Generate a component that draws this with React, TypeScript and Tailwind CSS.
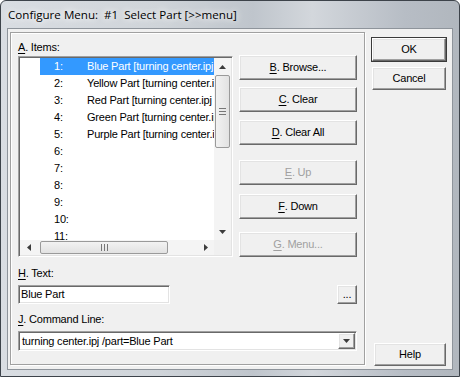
import React from "react";

const raised =
  "bg-[#f0f0f0] border border-t-white border-l-white border-r-[#696969] border-b-[#696969] shadow-[inset_-1px_-1px_0_#a0a0a0,inset_1px_1px_0_#e3e3e3]";
const sunken =
  "bg-white border border-t-[#a0a0a0] border-l-[#a0a0a0] border-r-white border-b-white shadow-[inset_1px_1px_0_#696969,inset_-1px_-1px_0_#e3e3e3] p-[1px]";

function U({ children }: { children: React.ReactNode }) {
  return <span className="underline underline-offset-[2px]">{children}</span>;
}

function Btn({
  children,
  disabled,
  className = "",
}: {
  children: React.ReactNode;
  disabled?: boolean;
  className?: string;
}) {
  return (
    <div
      className={`flex items-center justify-center text-[11px] ${raised} ${
        disabled ? "text-[#a0a0a0]" : "text-black"
      } ${className}`}
    >
      {children}
    </div>
  );
}

const rows = [
  "Blue Part [turning center.ipj /part=Blue Part]",
  "Yellow Part [turning center.ipj /part=Yellow Part]",
  "Red Part [turning center.ipj /part=Red Part]",
  "Green Part [turning center.ipj /part=Green Part]",
  "Purple Part [turning center.ipj /part=Purple Part]",
  "",
  "",
  "",
  "",
  "",
  "",
];

function Arrow({ dir }: { dir: "up" | "down" | "left" | "right" }) {
  const d = {
    up: "M3.5 0L7 4H0z",
    down: "M0 0H7L3.5 4z",
    left: "M4 0V7L0 3.5z",
    right: "M0 0L4 3.5L0 7z",
  }[dir];
  const horiz = dir === "left" || dir === "right";
  return (
    <svg width={horiz ? 4 : 7} height={horiz ? 7 : 4} viewBox={horiz ? "0 0 4 7" : "0 0 7 4"}>
      <path d={d} fill="#3c3c3c" />
    </svg>
  );
}

function ItemList() {
  return (
    <div className={`w-[215px] h-[201px] flex flex-col ${sunken}`}>
      <div className="flex h-[182px]">
        {/* rows */}
        <div className="w-[194px] overflow-hidden">
          {rows.map((t, i) => (
            <div key={i} className="h-[17px] flex">
              <div className="w-[20px] shrink-0" />
              <div
                className={`flex-1 flex items-center pl-[14px] whitespace-nowrap ${
                  i === 0 ? "bg-[#3399ff] text-white" : "text-black"
                }`}
              >
                <span className="w-[33px] shrink-0">{i + 1}:</span>
                <span>{t}</span>
              </div>
            </div>
          ))}
        </div>
        {/* vertical scrollbar */}
        <div className="w-[17px] flex flex-col bg-[#f4f4f4]">
          <div className="h-[17px] flex items-center justify-center">
            <Arrow dir="up" />
          </div>
          <div className="mx-[1px] h-[73px] rounded-[2px] border border-[#9a9a9a] bg-[linear-gradient(90deg,#f2f2f2,#e2e2e2)] flex flex-col items-center justify-center gap-[2px]">
            <div className="w-[7px] h-[1px] bg-[#777]" />
            <div className="w-[7px] h-[1px] bg-[#777]" />
            <div className="w-[7px] h-[1px] bg-[#777]" />
          </div>
          <div className="flex-1" />
          <div className="h-[17px] flex items-center justify-center">
            <Arrow dir="down" />
          </div>
        </div>
      </div>
      {/* horizontal scrollbar */}
      <div className="flex h-[17px]">
        <div className="w-[194px] flex bg-[#f4f4f4]">
          <div className="w-[17px] flex items-center justify-center">
            <Arrow dir="left" />
          </div>
          <div className="ml-[3px] my-[1px] w-[128px] rounded-[2px] border border-[#9a9a9a] bg-[linear-gradient(180deg,#f2f2f2,#e2e2e2)] flex items-center justify-center gap-[2px]">
            <div className="w-[1px] h-[7px] bg-[#777]" />
            <div className="w-[1px] h-[7px] bg-[#777]" />
            <div className="w-[1px] h-[7px] bg-[#777]" />
          </div>
          <div className="flex-1" />
          <div className="w-[17px] flex items-center justify-center">
            <Arrow dir="right" />
          </div>
        </div>
        <div className="w-[17px] bg-[#f0f0f0]" />
      </div>
    </div>
  );
}

export default function App() {
  return (
    <div className="w-[460px] h-[377px] flex flex-col rounded-t-[6px] border border-[#3d434a] overflow-hidden bg-[linear-gradient(90deg,#d9dde2_0%,#cfd4d9_35%,#bfc5cc_55%,#d3d7dc_68%,#b7bdc5_88%,#b1b7be_100%)] font-['Liberation_Sans',Arial,sans-serif]">
      {/* Title bar */}
      <div className="h-[27px] flex items-center pl-[7px] text-[11.6px] font-['Open_Sans',sans-serif] text-black whitespace-pre [text-shadow:0_0_6px_#fff,0_0_10px_#fff]">
        Configure Menu:  #1  Select Part [&gt;&gt;menu]
      </div>

      {/* Client area */}
      <div className="flex-1 mx-[6px] mb-[6px] border border-[#8e949b] bg-[#f0f0f0] flex pl-[2px] pt-[3px] text-[11px] tracking-[-0.2px] text-black">
        {/* Group box */}
        <div className="w-[355px] h-[333px] border border-[#a0a0a0] shadow-[inset_1px_1px_0_#fff,1px_1px_0_#fff] pl-[7px] pr-[6px] flex flex-col">
          <div className="flex mt-[7px]">
            <div className="flex flex-col">
              <div className="h-[14px] leading-[14px]">
                <U>A</U>. Items:
              </div>
              <div className="mt-[2px]">
                <ItemList />
              </div>
            </div>
            <div className="ml-[6px] w-[118px] flex flex-col mt-[15px]">
              <Btn className="h-[25px]">
                <U>B</U>. Browse...
              </Btn>
              <Btn className="h-[25px] mt-[7px]">
                <U>C</U>. Clear
              </Btn>
              <Btn className="h-[25px] mt-[8px]">
                <U>D</U>. Clear All
              </Btn>
              <Btn className="h-[25px] mt-[15px]" disabled>
                <U>E</U>. Up
              </Btn>
              <Btn className="h-[25px] mt-[9px]">
                <U>F</U>. Down
              </Btn>
              <Btn className="h-[25px] mt-[13px]" disabled>
                <U>G</U>. Menu...
              </Btn>
            </div>
          </div>

          <div className="h-[14px] leading-[14px] mt-[9px]">
            <U>H</U>. Text:
          </div>
          <div className="flex mt-[5px] items-start">
            <div className={`w-[152px] h-[19px] flex items-center pl-[2px] ${sunken}`}>Blue Part</div>
            <Btn className="ml-auto mr-[1px] w-[20px] h-[19px]">...</Btn>
          </div>

          <div className="h-[14px] leading-[14px] mt-[8px]">
            <U>J</U>. Command Line:
          </div>
          <div className={`mt-[5px] w-[339px] h-[20px] flex items-center ${sunken}`}>
            <div className="flex-1 pl-[2px] whitespace-nowrap overflow-hidden">
              turning center.ipj /part=Blue Part
            </div>
            <div className={`w-[17px] h-[16px] flex items-center justify-center ${raised}`}>
              <Arrow dir="down" />
            </div>
          </div>
        </div>

        {/* Right column */}
        <div className="ml-[7px] w-[74px] flex flex-col pt-[6px] pb-[3px]">
          <Btn className="h-[23px] outline outline-1 outline-[#3a3a3a]">OK</Btn>
          <Btn className="h-[23px] mt-[6px]">Cancel</Btn>
          <Btn className="h-[23px] mt-auto ml-[2px]">Help</Btn>
        </div>
      </div>
    </div>
  );
}
